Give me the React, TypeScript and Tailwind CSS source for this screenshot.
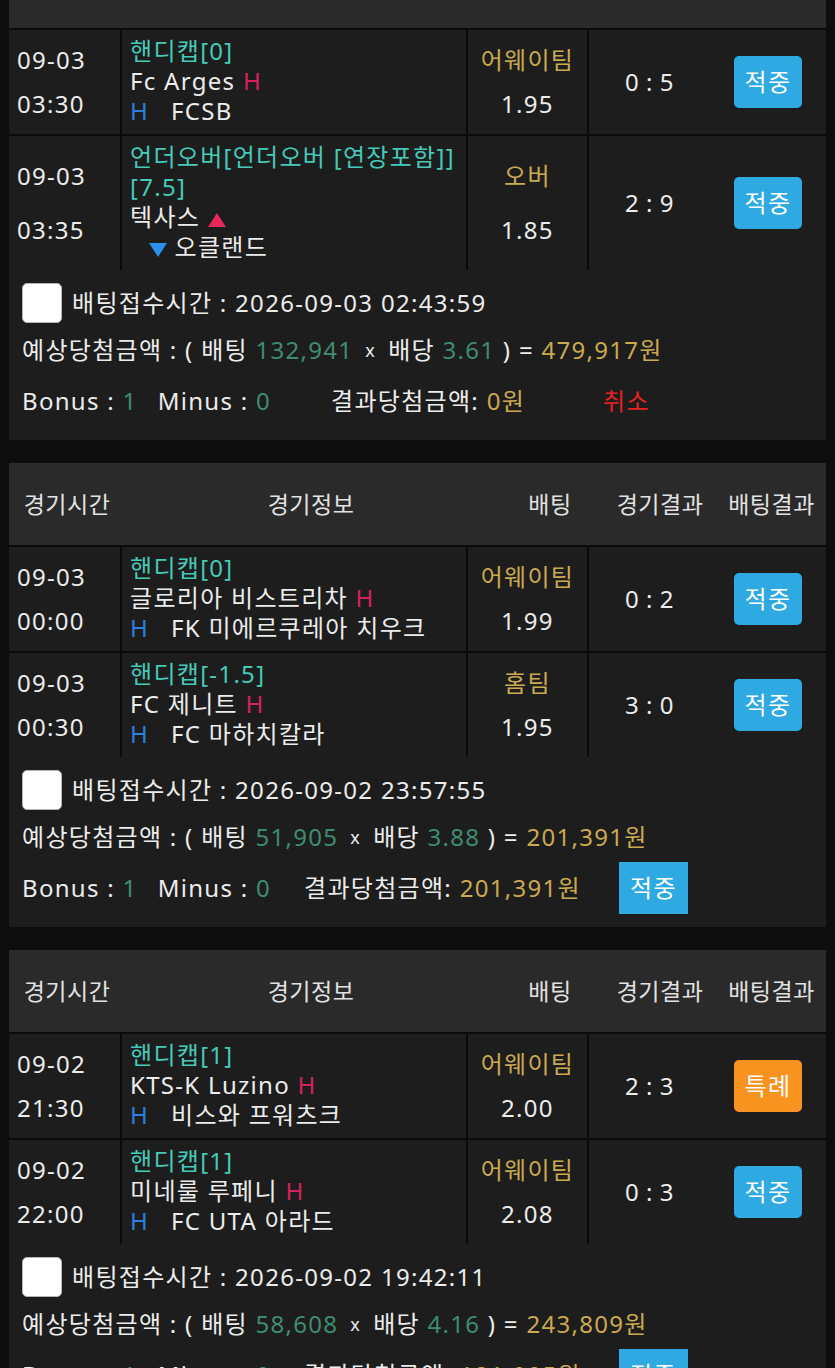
import React from "react";

type Game = {
  date: string;
  time: string;
  market: string[];
  home: string;
  away: string;
  overUnder?: boolean;
  pick: string;
  odds: string;
  score: string;
  result: "적중" | "특례";
};

type Slip = {
  accepted: string;
  stake: string;
  odds: string;
  expected: string;
  bonus: string;
  minus: string;
  payout: string;
  status: "cancel" | "win";
  payoutGap: string;
  statusGap: string;
  games: Game[];
};

const slips: Slip[] = [
  {
    accepted: "2026-09-03 02:43:59",
    stake: "132,941",
    odds: "3.61",
    expected: "479,917원",
    bonus: "1",
    minus: "0",
    payout: "0원",
    status: "cancel",
    payoutGap: "ml-[60px]",
    statusGap: "ml-[78px]",
    games: [
      {
        date: "09-03",
        time: "03:30",
        market: ["핸디캡[0]"],
        home: "Fc Arges",
        away: "FCSB",
        pick: "어웨이팀",
        odds: "1.95",
        score: "0 : 5",
        result: "적중",
      },
      {
        date: "09-03",
        time: "03:35",
        market: ["언더오버[언더오버 [연장포함]]", "[7.5]"],
        home: "텍사스",
        away: "오클랜드",
        overUnder: true,
        pick: "오버",
        odds: "1.85",
        score: "2 : 9",
        result: "적중",
      },
    ],
  },
  {
    accepted: "2026-09-02 23:57:55",
    stake: "51,905",
    odds: "3.88",
    expected: "201,391원",
    bonus: "1",
    minus: "0",
    payout: "201,391원",
    status: "win",
    payoutGap: "ml-[33px]",
    statusGap: "ml-[38px]",
    games: [
      {
        date: "09-03",
        time: "00:00",
        market: ["핸디캡[0]"],
        home: "글로리아 비스트리차",
        away: "FK 미에르쿠레아 치우크",
        pick: "어웨이팀",
        odds: "1.99",
        score: "0 : 2",
        result: "적중",
      },
      {
        date: "09-03",
        time: "00:30",
        market: ["핸디캡[-1.5]"],
        home: "FC 제니트",
        away: "FC 마하치칼라",
        pick: "홈팀",
        odds: "1.95",
        score: "3 : 0",
        result: "적중",
      },
    ],
  },
  {
    accepted: "2026-09-02 19:42:11",
    stake: "58,608",
    odds: "4.16",
    expected: "243,809원",
    bonus: "1",
    minus: "0",
    payout: "121,905원",
    status: "win",
    payoutGap: "ml-[33px]",
    statusGap: "ml-[38px]",
    games: [
      {
        date: "09-02",
        time: "21:30",
        market: ["핸디캡[1]"],
        home: "KTS-K Luzino",
        away: "비스와 프워츠크",
        pick: "어웨이팀",
        odds: "2.00",
        score: "2 : 3",
        result: "특례",
      },
      {
        date: "09-02",
        time: "22:00",
        market: ["핸디캡[1]"],
        home: "미네룰 루페니",
        away: "FC UTA 아라드",
        pick: "어웨이팀",
        odds: "2.08",
        score: "0 : 3",
        result: "적중",
      },
    ],
  },
];

function Triangle({ up }: { up?: boolean }) {
  return (
    <svg
      width="18"
      height="14"
      viewBox="0 0 18 14"
      className="inline-block align-[-1px]"
    >
      {up ? (
        <polygon points="9,0 18,14 0,14" fill="#e8285c" />
      ) : (
        <polygon points="0,0 18,0 9,14" fill="#2a90ea" />
      )}
    </svg>
  );
}

function HeaderBar() {
  return (
    <div className="flex h-[82px] items-center bg-[#2a2a2a] text-[23px] tracking-[0.5px] text-[#e2e2e2]">
      <div className="w-[116px] text-center">경기시간</div>
      <div className="w-[372px] text-center">경기정보</div>
      <div className="w-[106px] text-center">배팅</div>
      <div className="w-[114px] text-center">경기결과</div>
      <div className="w-[109px] text-center">배팅결과</div>
    </div>
  );
}

function GameRow({ game }: { game: Game }) {
  const badge =
    game.result === "특례"
      ? "bg-[#f7931e]"
      : "bg-[#2ea9e1]";
  return (
    <div className="grid grid-cols-[111px_344px_119px_1fr] gap-x-[2px]">
      <div className="flex flex-col justify-evenly bg-[#1d1d1d] pl-[8px]">
        <span>{game.date}</span>
        <span>{game.time}</span>
      </div>
      <div className="bg-[#1d1d1d] pb-[8px] pl-[8px] pt-[6px]">
        {game.market.map((m) => (
          <div key={m} className="text-[#45cab9]">
            {m}
          </div>
        ))}
        {game.overUnder ? (
          <>
            <div>
              {game.home} <Triangle up />
            </div>
            <div className="pl-[19px]">
              <Triangle /> {game.away}
            </div>
          </>
        ) : (
          <>
            <div>
              {game.home} <span className="text-[#d6215a]">H</span>
            </div>
            <div className="flex">
              <span className="w-[41px] text-[#2f7ed8]">H</span>
              <span>{game.away}</span>
            </div>
          </>
        )}
      </div>
      <div className="flex flex-col items-center justify-evenly bg-[#1d1d1d]">
        <span className="text-[#cba94f]">{game.pick}</span>
        <span>{game.odds}</span>
      </div>
      <div className="flex items-center bg-[#1d1d1d]">
        <div className="w-[121px] text-center tracking-[0.5px]">{game.score}</div>
        <div className="flex flex-1 justify-center">
          <span
            className={`flex h-[52px] w-[68px] items-center justify-center rounded-[5px] text-white ${badge}`}
          >
            {game.result}
          </span>
        </div>
      </div>
    </div>
  );
}

function SlipFooter({ slip }: { slip: Slip }) {
  return (
    <div className="bg-[#1d1d1d] px-[13px] py-[13px]">
      <div className="flex h-[40px] items-center">
        <span className="h-[40px] w-[40px] rounded-[5px] border border-[#b5b5b5] bg-white" />
        <span className="ml-[10px]">배팅접수시간 : {slip.accepted}</span>
      </div>
      <div className="mt-[12px] flex h-[30px] items-center whitespace-pre">
        <span>예상당첨금액 : ( 배팅 </span>
        <span className="text-[#3f8c70]">{slip.stake}</span>
        <span className="mx-[12px] text-[18px]">x</span>
        <span>배당 </span>
        <span className="text-[#3f8c70]">{slip.odds}</span>
        <span> ) = </span>
        <span className="text-[#cba94f]">{slip.expected}</span>
      </div>
      <div className="mt-[10px] flex h-[52px] items-center whitespace-pre">
        <span>Bonus : </span>
        <span className="text-[#3f8c70]">{slip.bonus}</span>
        <span className="ml-[20px]">Minus : </span>
        <span className="text-[#3f8c70]">{slip.minus}</span>
        <span className={slip.payoutGap}>결과당첨금액: </span>
        <span className="text-[#cba94f]">{slip.payout}</span>
        {slip.status === "cancel" ? (
          <span className={`${slip.statusGap} text-[#e52222]`}>취소</span>
        ) : (
          <span
            className={`${slip.statusGap} flex h-[52px] w-[69px] items-center justify-center bg-[#2ea9e1] text-white`}
          >
            적중
          </span>
        )}
      </div>
    </div>
  );
}

export default function App() {
  return (
    <div className="min-h-screen overflow-hidden bg-[#0d0d0d] font-['Noto_Sans','Noto_Sans_CJK_KR',sans-serif] text-[24px] leading-[30px] tracking-[1.3px] text-[#ececec]">
      <div className="-mt-[54px] flex flex-col gap-[23px] px-[9px]">
        {slips.map((slip) => (
          <section key={slip.accepted}>
            <div className="flex flex-col gap-y-[2px] bg-[#0a0a0a]">
              <HeaderBar />
              {slip.games.map((g) => (
                <GameRow key={g.date + g.time} game={g} />
              ))}
            </div>
            <SlipFooter slip={slip} />
          </section>
        ))}
      </div>
    </div>
  );
}
